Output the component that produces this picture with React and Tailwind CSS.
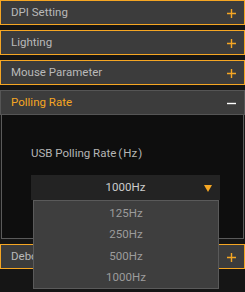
import React from "react";

const Plus = () => (
  <svg width="9" height="9" viewBox="0 0 9 9" className="shrink-0">
    <path d="M4.5 0v9M0 4.5h9" stroke="#f5a623" strokeWidth="1.4" />
  </svg>
);

const Minus = () => (
  <svg width="9" height="9" viewBox="0 0 9 9" className="shrink-0">
    <path d="M0 4.5h9" stroke="#ffffff" strokeWidth="1.4" />
  </svg>
);

const Header = ({ title }) => (
  <div className="h-[25px] flex items-center justify-between pl-[10px] pr-[8px] pt-[1px] bg-[#3c3c3c] border border-[#f5a623] text-[11.5px] text-[#b9b9b9]">
    <span>{title}</span>
    <Plus />
  </div>
);

const App = () => {
  const rates = ["125Hz", "250Hz", "500Hz", "1000Hz"];

  return (
    <div
      className="w-[245px] h-[292px] bg-[#151515] flex flex-col gap-[5px] overflow-hidden"
      style={{ fontFamily: 'Roboto, "Liberation Sans", "Noto Sans CJK SC", sans-serif' }}
    >
      <Header title="DPI Setting" />
      <Header title="Lighting" />
      <Header title="Mouse Parameter" />

      <div className="flex flex-col">
        <div className="h-[25px] flex items-center justify-between pl-[10px] pr-[8px] pt-[1px] bg-[#3c3c3c] border border-[#555555] text-[11.5px] text-[#f5a623]">
          <span>Polling Rate</span>
          <Minus />
        </div>
        <div className="mx-[1px] h-[124px] bg-[#0e0e0e] border-x border-b border-[#5a5a5a] pt-[32px]">
          <div className="pl-[29px] text-[11.5px] text-[#b5b5b5] leading-[12px]">
            USB Polling Rate<span className="ml-[2px] mr-[1px]">(</span>Hz<span className="ml-[1px]">)</span>
          </div>
          <div className="relative mt-[16px] ml-[29px] w-[189px]">
            <div className="h-[25px] bg-[#232323] flex items-center justify-center text-[11.5px] text-[#cccccc]">
              1000Hz
              <svg width="8" height="7" viewBox="0 0 8 7" className="absolute right-[8px] top-[10px]">
                <path d="M0 0h8L4 7z" fill="#f5a623" />
              </svg>
            </div>
            <div className="absolute z-10 left-[2px] top-[25px] w-[186px] h-[89px] bg-[#3e3e3e] border border-[#5a5a5a] flex flex-col items-center pt-[2px] text-[11.5px] text-[#9c9c9c]">
              {rates.map((r) => (
                <div key={r} className="h-[21.5px] flex items-center">
                  {r}
                </div>
              ))}
            </div>
          </div>
        </div>
      </div>

      <Header title="Debounce Time" />
    </div>
  );
};

export default App;
